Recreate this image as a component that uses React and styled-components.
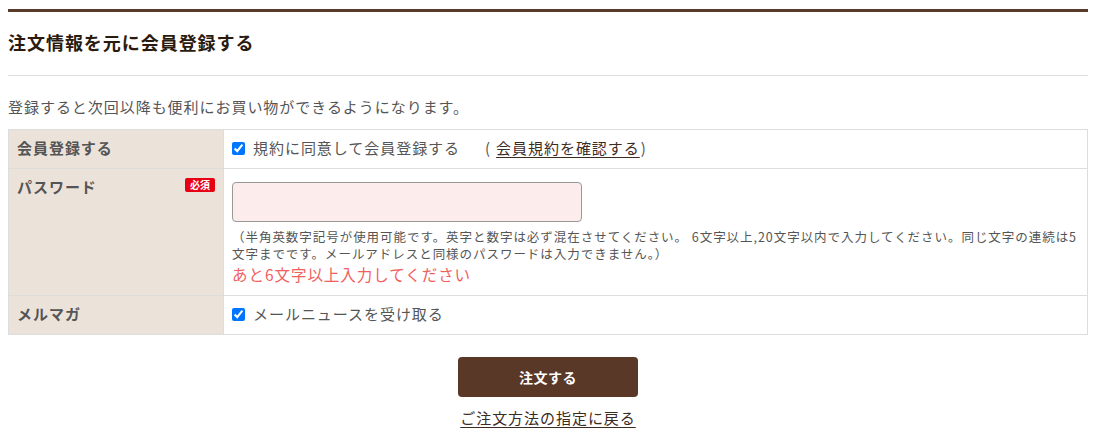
import React from 'react';
import styled, { createGlobalStyle } from 'styled-components';

const GlobalStyle = createGlobalStyle`
  body {
    margin: 0;
    background: #fff;
    font-family: "Noto Sans CJK JP", "Noto Sans", sans-serif;
    letter-spacing: 0.06em;
    color: #555;
  }
`;

// --- Styled Components ---
const Page = styled.div`
  padding: 9px 18px 0 8px;
`;
const Section = styled.section`
  border-top: 3px solid #5a3a2a;
`;
const Heading = styled.h2`
  margin: 0;
  padding: 18px 0 20px;
  font-size: 18px;
  line-height: 25px;
  font-weight: 700;
  color: #2b1a0e;
  border-bottom: 1px solid #ddd;
`;
const Intro = styled.p`
  margin: 19px 0 10px;
  font-size: 15px;
  line-height: 24px;
  color: #555;
`;
const Table = styled.table`
  width: 100%;
  border-collapse: collapse;
  font-size: 15px;
`;
const LabelCell = styled.th`
  width: 198px;
  padding: 8px 8px 10px;
  background: #ebe3da;
  border: 1px solid #ddd;
  text-align: left;
  vertical-align: top;
  font-weight: 700;
  line-height: 20px;
  color: #555;
`;
const LabelInner = styled.div`
  display: flex;
  justify-content: space-between;
  align-items: flex-start;
`;
const Required = styled.span`
  margin-top: 1px;
  padding: 0 5px;
  background: #e60012;
  color: #fff;
  font-size: 10px;
  line-height: 14px;
  font-weight: 700;
  border-radius: 2px;
  letter-spacing: 0;
`;
const ValueCell = styled.td`
  padding: ${(p) => (p.tall ? '13px 8px 11px' : '8px 8px 10px')};
  border: 1px solid #ddd;
  vertical-align: top;
  line-height: 20px;
  color: #555;
`;
const CheckLabel = styled.label`
  display: inline-flex;
  align-items: center;
  vertical-align: top;
  height: 20px;
`;
const Check = styled.input`
  width: 13px;
  height: 13px;
  margin: 0 8px 0 0;
  accent-color: #0075ff;
`;
const TermsNote = styled.span`
  margin-left: 25px;
  color: #555;
`;
const TermsLink = styled.a`
  color: #3d2b1f;
  text-decoration: underline;
  text-underline-offset: 3px;
  margin: 0 1px 0 5px;
`;
const PasswordInput = styled.input`
  display: block;
  box-sizing: border-box;
  width: 350px;
  height: 40px;
  margin: 0;
  background: #fdecec;
  border: 1px solid #999;
  border-radius: 4px;
`;
const Note = styled.p`
  margin: 6px 0 0;
  font-size: 12.5px;
  line-height: 17px;
  color: #555;
`;
const ErrorText = styled.p`
  margin: 2px 0 0;
  font-size: 15.5px;
  line-height: 20px;
  color: #f0605e;
`;
const Actions = styled.div`
  display: flex;
  flex-direction: column;
  align-items: center;
  gap: 11px;
  margin-top: 22px;
`;
const SubmitButton = styled.button`
  width: 180px;
  height: 40px;
  border: none;
  border-radius: 4px;
  background: #5a3828;
  color: #fff;
  font-family: inherit;
  font-size: 14px;
  font-weight: 700;
  letter-spacing: 0.04em;
  cursor: pointer;
`;
const BackLink = styled.a`
  font-size: 15px;
  line-height: 20px;
  color: #3d2b1f;
  text-decoration: underline;
  text-underline-offset: 3px;
`;

const App = () => {
  return (
    <>
      <GlobalStyle />
      <Page>
        <Section>
          <Heading>注文情報を元に会員登録する</Heading>
          <Intro>登録すると次回以降も便利にお買い物ができるようになります。</Intro>
          <Table>
            <tbody>
              <tr>
                <LabelCell>会員登録する</LabelCell>
                <ValueCell>
                  <CheckLabel>
                    <Check type="checkbox" defaultChecked />
                    規約に同意して会員登録する
                  </CheckLabel>
                  <TermsNote>
                    (<TermsLink href="#">会員規約を確認する</TermsLink>)
                  </TermsNote>
                </ValueCell>
              </tr>
              <tr>
                <LabelCell>
                  <LabelInner>
                    パスワード
                    <Required>必須</Required>
                  </LabelInner>
                </LabelCell>
                <ValueCell tall>
                  <PasswordInput type="password" />
                  <Note>
                    （半角英数字記号が使用可能です。英字と数字は必ず混在させてください。 6文字以上,20文字以内で入力してください。同じ文字の連続は5文字までです。メールアドレスと同様のパスワードは入力できません。）
                  </Note>
                  <ErrorText>あと6文字以上入力してください</ErrorText>
                </ValueCell>
              </tr>
              <tr>
                <LabelCell>メルマガ</LabelCell>
                <ValueCell>
                  <CheckLabel>
                    <Check type="checkbox" defaultChecked />
                    メールニュースを受け取る
                  </CheckLabel>
                </ValueCell>
              </tr>
            </tbody>
          </Table>
          <Actions>
            <SubmitButton type="button">注文する</SubmitButton>
            <BackLink href="#">ご注文方法の指定に戻る</BackLink>
          </Actions>
        </Section>
      </Page>
    </>
  );
};

export default App;
